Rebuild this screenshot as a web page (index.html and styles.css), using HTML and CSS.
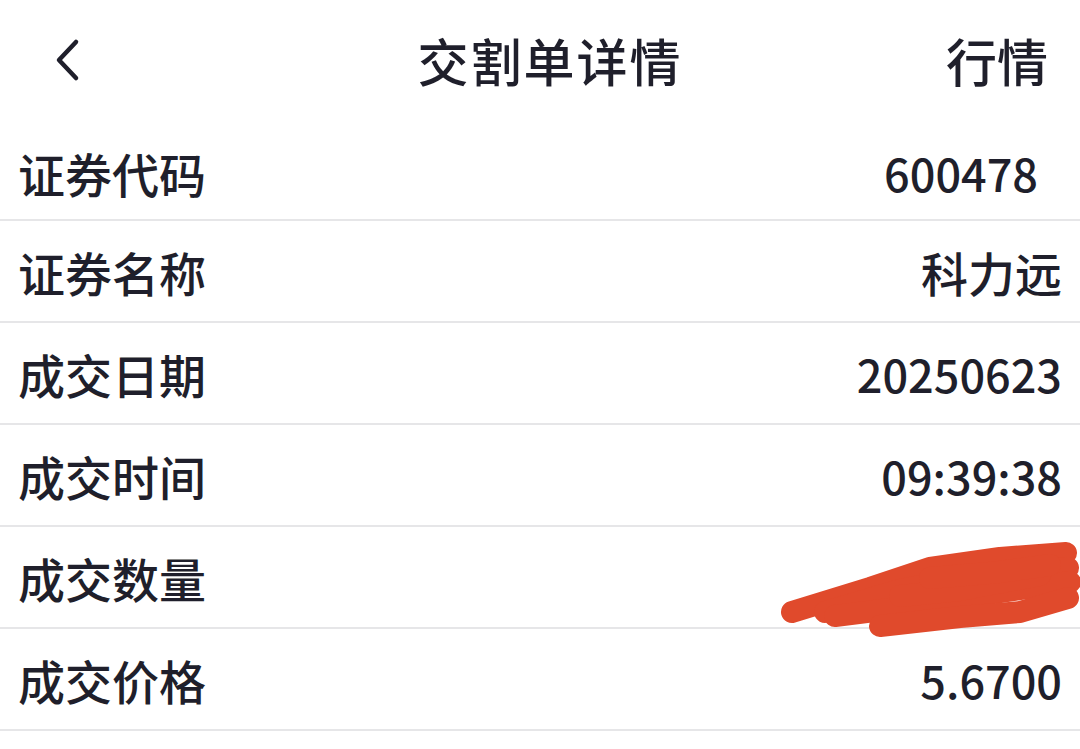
FILE: index.html
```html
<!DOCTYPE html>
<html lang="zh-CN">
<head>
    <meta charset="UTF-8">
    <meta name="viewport" content="width=device-width, initial-scale=1.0">
    <title>交割单详情</title>
    <link rel="stylesheet" href="styles.css">
</head>
<body>

    <div class="page">
        <div class="top-bar">
            <span class="back">
                <svg width="30" height="44" viewBox="0 0 30 44">
                    <path d="M24 4 L7 22 L24 40" fill="none" stroke="#1f1f2b" stroke-width="4.5" stroke-linecap="round" stroke-linejoin="round"/>
                </svg>
            </span>
            <h1 class="title">交割单详情</h1>
            <span class="quote-link">行情</span>
        </div>

        <div class="detail-list">
            <div class="row">
                <span class="label">证券代码</span>
                <span class="value value-code">600478</span>
            </div>
            <div class="row">
                <span class="label">证券名称</span>
                <span class="value value-name">科力远</span>
            </div>
            <div class="row">
                <span class="label">成交日期</span>
                <span class="value">20250623</span>
            </div>
            <div class="row">
                <span class="label">成交时间</span>
                <span class="value">09:39:38</span>
            </div>
            <div class="row">
                <span class="label">成交数量</span>
                <span class="value"></span>
                <!-- 遮挡涂抹 -->
                <svg class="scribble" viewBox="0 527 1080 102" width="1080" height="102">
                    <g fill="none" stroke="#e04a2c" stroke-width="22" stroke-linecap="round" stroke-linejoin="round">
                        <path d="M792 612 L870 588 L930 568 L1000 558 L1066 553"/>
                        <path d="M825 612 L900 590 L960 578 L1068 568"/>
                        <path d="M835 616 L930 604 L1000 592 L1070 582"/>
                        <path d="M880 626 L960 617 L1020 612 L1068 598"/>
                        <path d="M900 596 L960 590 L1040 575"/>
                        <path d="M930 578 L1000 572 L1050 565"/>
                    </g>
                </svg>
            </div>
            <div class="row">
                <span class="label">成交价格</span>
                <span class="value">5.6700</span>
            </div>
        </div>
    </div>

</body>
</html>
```

FILE: styles.css
```css
body {
    margin: 0;
    background-color: #ffffff;
    font-family: "Noto Sans CJK SC", "Noto Sans", sans-serif;
    color: #1f1f2b;
}

.page {
    width: 1080px;
    overflow: hidden;
}

.top-bar {
    height: 119px;
    display: flex;
    align-items: center;
    justify-content: space-between;
    padding: 0 32px 0 52px;
}

.back {
    display: flex;
    width: 120px;
}

.title {
    margin: 0 0 0 30px;
    font-size: 51px;
    font-weight: 500;
    letter-spacing: 2px;
}

.quote-link {
    width: 150px;
    text-align: right;
    font-size: 51px;
    font-weight: 500;
}

.detail-list {
    border-bottom: 2px solid #e6e6e8;
}

.row {
    position: relative;
    height: 100px;
    display: flex;
    align-items: center;
    justify-content: space-between;
    padding: 0 18px;
    border-bottom: 2px solid #e6e6e8;
    font-size: 47px;
    font-weight: 500;
}

.row:first-child {
    padding-top: 6px;
    height: 94px;
}

.row:last-child {
    border-bottom: none;
}

.value {
    text-align: right;
    font-size: 45px;
}

.value-name {
    font-size: 47px;
}

.value-code {
    padding-right: 24px;
}

.scribble {
    position: absolute;
    left: 0;
    top: 0;
    overflow: visible;
    z-index: 1;
}
```
